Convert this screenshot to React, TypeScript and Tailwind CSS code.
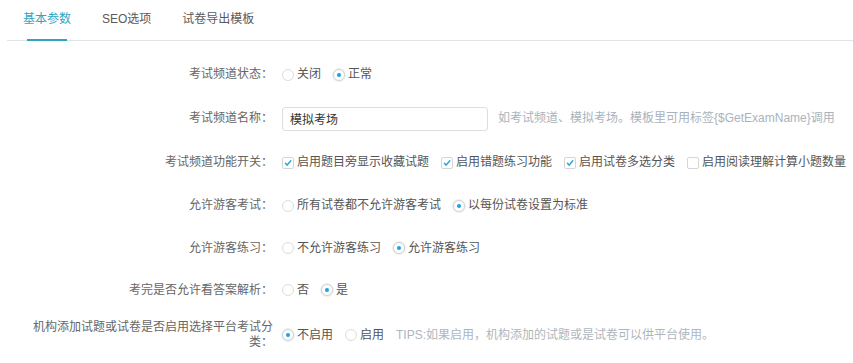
import type { ReactNode } from "react";

function Radio({ checked = false }: { checked?: boolean }) {
  return (
    <span
      className={`flex h-[12px] w-[12px] shrink-0 items-center justify-center rounded-full border bg-white ${
        checked ? "border-[#cfd3d6] shadow-[0_0_0_1px_#eef0f2]" : "border-[#dcdcdc]"
      }`}
    >
      {checked && <span className="h-[4px] w-[4px] rounded-full bg-[#1ba1e2]" />}
    </span>
  );
}

function Checkbox({ checked = false }: { checked?: boolean }) {
  return (
    <span className="flex h-[12px] w-[12px] shrink-0 items-center justify-center rounded-[2px] border border-[#d6d6d6] bg-white">
      {checked && (
        <svg width="8" height="8" viewBox="0 0 8 8" fill="none">
          <path d="M1.4 4.3 L3.2 6.1 L6.8 1.8" stroke="#2aa6e0" strokeWidth="1.5" strokeLinecap="round" strokeLinejoin="round" />
        </svg>
      )}
    </span>
  );
}

function Option({ children, type, checked }: { children: ReactNode; type: "radio" | "check"; checked?: boolean }) {
  return (
    <label className="flex items-center gap-[3px] text-[#555]">
      {type === "radio" ? <Radio checked={checked} /> : <Checkbox checked={checked} />}
      <span>{children}</span>
    </label>
  );
}

function Row({ label, h, children }: { label: string; h: string; children: ReactNode }) {
  return (
    <div className={`flex items-center ${h}`}>
      <div className="w-[240px] shrink-0 text-right leading-[15px] text-[#666]">{label}</div>
      <div className="ml-[9px] flex items-center gap-[12px] whitespace-nowrap">{children}</div>
    </div>
  );
}

const TABS = ["基本参数", "SEO选项", "试卷导出模板"];

export default function App() {
  return (
    <div className="h-[363px] w-[853px] overflow-hidden bg-white font-['Liberation_Sans','Noto_Sans_CJK_SC',sans-serif] text-[12px] leading-[15px]">
      <div className="ml-[7px] flex h-[41px] gap-[31px] border-b border-[#dfe5e6] pl-[16px]">
        {TABS.map((t, i) => (
          <div
            key={t}
            className={`relative flex items-center pb-px ${i === 0 ? "text-[#2fa5c1]" : "text-[#5a5a5a]"}`}
          >
            {t}
            {i === 0 && (
              <span className="absolute bottom-[-1px] left-1/2 h-[2px] w-[40px] -translate-x-1/2 bg-[#2fa5c1]" />
            )}
          </div>
        ))}
      </div>

      <div className="pl-[33px] pt-[12px]">
        <Row label="考试频道状态：" h="h-[43px]">
          <Option type="radio">关闭</Option>
          <Option type="radio" checked>
            正常
          </Option>
        </Row>

        <Row label="考试频道名称：" h="h-[45px]">
          <input
            defaultValue="模拟考场"
            className="h-[24px] w-[206px] rounded-[3px] border border-[#dcdfe2] px-[7px] text-[12px] text-[#333] outline-none"
          />
          <span className="-ml-[2px] text-[#a9b3bc]">如考试频道、模拟考场。模板里可用标签{"{$GetExamName}"}调用</span>
        </Row>

        <Row label="考试频道功能开关：" h="h-[43px]">
          <Option type="check" checked>
            启用题目旁显示收藏试题
          </Option>
          <Option type="check" checked>
            启用错题练习功能
          </Option>
          <Option type="check" checked>
            启用试卷多选分类
          </Option>
          <Option type="check">启用阅读理解计算小题数量</Option>
        </Row>

        <Row label="允许游客考试：" h="h-[43px]">
          <Option type="radio">所有试卷都不允许游客考试</Option>
          <Option type="radio" checked>
            以每份试卷设置为标准
          </Option>
        </Row>

        <Row label="允许游客练习：" h="h-[42px]">
          <Option type="radio">不允许游客练习</Option>
          <Option type="radio" checked>
            允许游客练习
          </Option>
        </Row>

        <Row label="考完是否允许看答案解析：" h="h-[42px]">
          <Option type="radio">否</Option>
          <Option type="radio" checked>
            是
          </Option>
        </Row>

        <Row label="机构添加试题或试卷是否启用选择平台考试分类：" h="h-[48px]">
          <Option type="radio" checked>
            不启用
          </Option>
          <Option type="radio">启用</Option>
          <span className="text-[#aeb6bd]">TIPS:如果启用，机构添加的试题或是试卷可以供平台使用。</span>
        </Row>
      </div>
    </div>
  );
}
